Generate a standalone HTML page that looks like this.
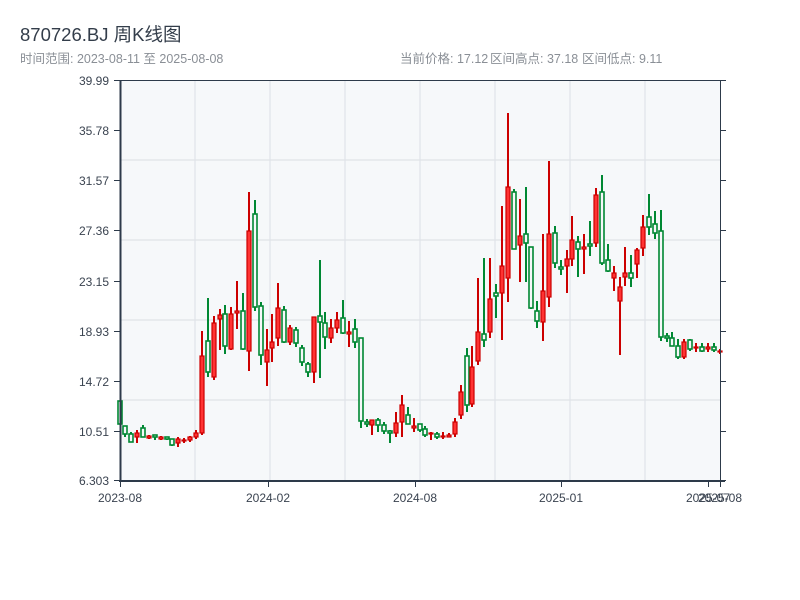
<!DOCTYPE html>
<html><head><meta charset="utf-8"><style>
html,body{margin:0;padding:0;background:#fff;width:800px;height:600px;overflow:hidden}
svg{display:block}
text{font-family:"Liberation Sans","Noto Sans CJK SC",sans-serif}
.r line,line.r{stroke:#cc0000;stroke-width:2}
.g line,line.g{stroke:#008833;stroke-width:2}
rect.r{fill:#ff3333;stroke:#cc0000;stroke-width:1.2}
rect.g{fill:#f6f8fa;stroke:#008833;stroke-width:1.6}
</style></head><body>
<svg width="800" height="600" xmlns="http://www.w3.org/2000/svg">
<text x="20" y="41" font-size="18.5" fill="#333d4a">870726.BJ 周K线图</text>
<text x="20" y="63" font-size="12.5" fill="#8a8f96">时间范围: 2023-08-11 至 2025-08-08</text>
<text x="400" y="63" font-size="12.5" fill="#8a8f96">当前价格: 17.12</text>
<text x="490" y="63" font-size="12.5" fill="#8a8f96">区间高点: 37.18</text>
<text x="582" y="63" font-size="12.5" fill="#8a8f96">区间低点: 9.11</text>
<rect x="120" y="80" width="600" height="400" fill="#f6f8fa"/>
<g stroke="#e0e3e8" stroke-width="1.2">
<line x1="195" y1="80" x2="195" y2="480"/><line x1="270" y1="80" x2="270" y2="480"/><line x1="345" y1="80" x2="345" y2="480"/><line x1="420" y1="80" x2="420" y2="480"/><line x1="495" y1="80" x2="495" y2="480"/><line x1="570" y1="80" x2="570" y2="480"/><line x1="645" y1="80" x2="645" y2="480"/>
<line x1="120" y1="160" x2="720" y2="160"/><line x1="120" y1="240" x2="720" y2="240"/><line x1="120" y1="320" x2="720" y2="320"/><line x1="120" y1="400" x2="720" y2="400"/>
</g>
<g id="c">
<rect class="g" x="118" y="401" width="4" height="23"/>
<line class="g" x1="125" y1="426" x2="125" y2="437"/><rect class="g" x="123" y="426" width="4" height="8"/>
<line class="g" x1="131" y1="432" x2="131" y2="442"/><rect class="g" x="129" y="434" width="4" height="8"/>
<line class="r" x1="137" y1="430" x2="137" y2="443"/><rect class="r" x="135" y="433" width="4" height="4"/>
<line class="g" x1="143" y1="425" x2="143" y2="437"/><rect class="g" x="141" y="428" width="4" height="9"/>
<line class="r" x1="149" y1="435" x2="149" y2="439"/><rect class="r" x="147" y="436" width="4" height="2"/>
<line class="g" x1="155" y1="435" x2="155" y2="440"/><rect class="g" x="153" y="435" width="4" height="2"/>
<line class="r" x1="161" y1="436" x2="161" y2="440"/><rect class="r" x="159" y="437" width="4" height="2"/>
<line class="g" x1="167" y1="437" x2="167" y2="440"/><rect class="g" x="165" y="437" width="4" height="2"/>
<line class="g" x1="172" y1="439" x2="172" y2="446"/><rect class="g" x="170" y="439" width="4" height="6"/>
<line class="r" x1="178" y1="437" x2="178" y2="447"/><rect class="r" x="176" y="439" width="4" height="4"/>
<line class="r" x1="184" y1="438" x2="184" y2="443"/><rect class="r" x="182" y="440" width="4" height="1"/>
<line class="r" x1="190" y1="436" x2="190" y2="442"/><rect class="r" x="188" y="437" width="4" height="3"/>
<line class="r" x1="196" y1="430" x2="196" y2="439"/><rect class="r" x="194" y="433" width="4" height="4"/>
<line class="r" x1="202" y1="331" x2="202" y2="435"/><rect class="r" x="200" y="356" width="4" height="77"/>
<line class="g" x1="208" y1="298" x2="208" y2="377"/><rect class="g" x="206" y="341" width="4" height="31"/>
<line class="r" x1="214" y1="316" x2="214" y2="380"/><rect class="r" x="212" y="323" width="4" height="54"/>
<line class="r" x1="220" y1="309" x2="220" y2="350"/><rect class="r" x="218" y="315" width="4" height="4"/>
<line class="g" x1="225" y1="305" x2="225" y2="354"/><rect class="g" x="223" y="314" width="4" height="32"/>
<line class="r" x1="231" y1="307" x2="231" y2="350"/><rect class="r" x="229" y="314" width="4" height="35"/>
<line class="r" x1="237" y1="281" x2="237" y2="329"/><rect class="r" x="235" y="311" width="4" height="2"/>
<line class="g" x1="243" y1="293" x2="243" y2="350"/><rect class="g" x="241" y="311" width="4" height="38"/>
<line class="r" x1="249" y1="192" x2="249" y2="371"/><rect class="r" x="247" y="231" width="4" height="120"/>
<line class="g" x1="255" y1="200" x2="255" y2="311"/><rect class="g" x="253" y="214" width="4" height="93"/>
<line class="g" x1="261" y1="302" x2="261" y2="365"/><rect class="g" x="259" y="306" width="4" height="49"/>
<line class="r" x1="267" y1="329" x2="267" y2="386"/><rect class="r" x="265" y="350" width="4" height="12"/>
<line class="r" x1="272" y1="314" x2="272" y2="362"/><rect class="r" x="270" y="342" width="4" height="6"/>
<line class="r" x1="278" y1="283" x2="278" y2="346"/><rect class="r" x="276" y="308" width="4" height="30"/>
<line class="g" x1="284" y1="306" x2="284" y2="343"/><rect class="g" x="282" y="310" width="4" height="32"/>
<line class="r" x1="290" y1="325" x2="290" y2="345"/><rect class="r" x="288" y="328" width="4" height="14"/>
<line class="g" x1="296" y1="327" x2="296" y2="347"/><rect class="g" x="294" y="330" width="4" height="13"/>
<line class="g" x1="302" y1="345" x2="302" y2="366"/><rect class="g" x="300" y="348" width="4" height="14"/>
<line class="g" x1="308" y1="362" x2="308" y2="377"/><rect class="g" x="306" y="364" width="4" height="8"/>
<line class="r" x1="314" y1="317" x2="314" y2="383"/><rect class="r" x="312" y="317" width="4" height="55"/>
<line class="g" x1="320" y1="260" x2="320" y2="378"/><rect class="g" x="318" y="316" width="4" height="6"/>
<line class="g" x1="325" y1="312" x2="325" y2="349"/><rect class="g" x="323" y="323" width="4" height="14"/>
<line class="r" x1="331" y1="319" x2="331" y2="343"/><rect class="r" x="329" y="328" width="4" height="10"/>
<line class="r" x1="337" y1="312" x2="337" y2="333"/><rect class="r" x="335" y="320" width="4" height="8"/>
<line class="g" x1="343" y1="300" x2="343" y2="334"/><rect class="g" x="341" y="318" width="4" height="15"/>
<line class="r" x1="349" y1="321" x2="349" y2="347"/><rect class="r" x="347" y="332" width="4" height="2"/>
<line class="g" x1="355" y1="319" x2="355" y2="348"/><rect class="g" x="353" y="329" width="4" height="13"/>
<line class="g" x1="361" y1="338" x2="361" y2="428"/><rect class="g" x="359" y="338" width="4" height="83"/>
<line class="g" x1="367" y1="419" x2="367" y2="427"/><rect class="g" x="365" y="422" width="4" height="2"/>
<line class="r" x1="372" y1="420" x2="372" y2="435"/><rect class="r" x="370" y="420" width="4" height="5"/>
<line class="g" x1="378" y1="418" x2="378" y2="432"/><rect class="g" x="376" y="420" width="4" height="5"/>
<line class="g" x1="384" y1="422" x2="384" y2="434"/><rect class="g" x="382" y="425" width="4" height="6"/>
<line class="g" x1="390" y1="430" x2="390" y2="443"/><rect class="g" x="388" y="431" width="4" height="2"/>
<line class="r" x1="396" y1="412" x2="396" y2="437"/><rect class="r" x="394" y="423" width="4" height="10"/>
<line class="r" x1="402" y1="395" x2="402" y2="437"/><rect class="r" x="400" y="405" width="4" height="17"/>
<line class="g" x1="408" y1="407" x2="408" y2="424"/><rect class="g" x="406" y="415" width="4" height="9"/>
<line class="r" x1="414" y1="418" x2="414" y2="432"/><rect class="r" x="412" y="426" width="4" height="2"/>
<line class="g" x1="420" y1="424" x2="420" y2="432"/><rect class="g" x="418" y="424" width="4" height="6"/>
<line class="g" x1="425" y1="426" x2="425" y2="437"/><rect class="g" x="423" y="429" width="4" height="6"/>
<line class="r" x1="431" y1="432" x2="431" y2="440"/><rect class="r" x="429" y="433" width="4" height="1"/>
<line class="g" x1="437" y1="432" x2="437" y2="439"/><rect class="g" x="435" y="434" width="4" height="3"/>
<line class="r" x1="443" y1="432" x2="443" y2="439"/><rect class="r" x="441" y="436" width="4" height="1"/>
<line class="r" x1="449" y1="433" x2="449" y2="437"/><rect class="r" x="447" y="435" width="4" height="2"/>
<line class="r" x1="455" y1="418" x2="455" y2="437"/><rect class="r" x="453" y="422" width="4" height="12"/>
<line class="r" x1="461" y1="385" x2="461" y2="419"/><rect class="r" x="459" y="392" width="4" height="23"/>
<line class="g" x1="467" y1="348" x2="467" y2="412"/><rect class="g" x="465" y="356" width="4" height="49"/>
<line class="r" x1="472" y1="346" x2="472" y2="407"/><rect class="r" x="470" y="367" width="4" height="37"/>
<line class="r" x1="478" y1="278" x2="478" y2="365"/><rect class="r" x="476" y="332" width="4" height="29"/>
<line class="g" x1="484" y1="258" x2="484" y2="347"/><rect class="g" x="482" y="334" width="4" height="6"/>
<line class="r" x1="490" y1="258" x2="490" y2="338"/><rect class="r" x="488" y="299" width="4" height="33"/>
<line class="g" x1="496" y1="284" x2="496" y2="318"/><rect class="g" x="494" y="293" width="4" height="3"/>
<line class="r" x1="502" y1="206" x2="502" y2="340"/><rect class="r" x="500" y="266" width="4" height="27"/>
<line class="r" x1="508" y1="113" x2="508" y2="302"/><rect class="r" x="506" y="187" width="4" height="91"/>
<line class="g" x1="514" y1="189" x2="514" y2="249"/><rect class="g" x="512" y="192" width="4" height="57"/>
<line class="r" x1="520" y1="199" x2="520" y2="282"/><rect class="r" x="518" y="236" width="4" height="9"/>
<line class="g" x1="526" y1="187" x2="526" y2="282"/><rect class="g" x="524" y="234" width="4" height="9"/>
<line class="g" x1="531" y1="247" x2="531" y2="309"/><rect class="g" x="529" y="247" width="4" height="61"/>
<line class="g" x1="537" y1="301" x2="537" y2="328"/><rect class="g" x="535" y="311" width="4" height="10"/>
<line class="r" x1="543" y1="234" x2="543" y2="341"/><rect class="r" x="541" y="291" width="4" height="31"/>
<line class="r" x1="549" y1="161" x2="549" y2="307"/><rect class="r" x="547" y="234" width="4" height="63"/>
<line class="g" x1="555" y1="226" x2="555" y2="268"/><rect class="g" x="553" y="233" width="4" height="30"/>
<line class="g" x1="561" y1="260" x2="561" y2="275"/><rect class="g" x="559" y="267" width="4" height="2"/>
<line class="r" x1="567" y1="250" x2="567" y2="293"/><rect class="r" x="565" y="259" width="4" height="7"/>
<line class="r" x1="572" y1="216" x2="572" y2="266"/><rect class="r" x="570" y="240" width="4" height="19"/>
<line class="g" x1="578" y1="236" x2="578" y2="277"/><rect class="g" x="576" y="242" width="4" height="7"/>
<line class="r" x1="584" y1="234" x2="584" y2="274"/><rect class="r" x="582" y="247" width="4" height="2"/>
<line class="g" x1="590" y1="221" x2="590" y2="256"/><rect class="g" x="588" y="244" width="4" height="2"/>
<line class="r" x1="596" y1="188" x2="596" y2="247"/><rect class="r" x="594" y="195" width="4" height="48"/>
<line class="g" x1="602" y1="175" x2="602" y2="265"/><rect class="g" x="600" y="192" width="4" height="71"/>
<line class="g" x1="608" y1="244" x2="608" y2="272"/><rect class="g" x="606" y="260" width="4" height="11"/>
<line class="r" x1="614" y1="266" x2="614" y2="291"/><rect class="r" x="612" y="273" width="4" height="5"/>
<line class="r" x1="620" y1="277" x2="620" y2="355"/><rect class="r" x="618" y="287" width="4" height="14"/>
<line class="r" x1="625" y1="247" x2="625" y2="286"/><rect class="r" x="623" y="273" width="4" height="4"/>
<line class="g" x1="631" y1="255" x2="631" y2="287"/><rect class="g" x="629" y="273" width="4" height="5"/>
<line class="r" x1="637" y1="248" x2="637" y2="278"/><rect class="r" x="635" y="250" width="4" height="14"/>
<line class="r" x1="643" y1="215" x2="643" y2="256"/><rect class="r" x="641" y="227" width="4" height="21"/>
<line class="g" x1="649" y1="194" x2="649" y2="235"/><rect class="g" x="647" y="217" width="4" height="10"/>
<line class="g" x1="655" y1="211" x2="655" y2="239"/><rect class="g" x="653" y="224" width="4" height="9"/>
<line class="g" x1="661" y1="210" x2="661" y2="341"/><rect class="g" x="659" y="231" width="4" height="106"/>
<line class="g" x1="667" y1="333" x2="667" y2="342"/><rect class="g" x="665" y="336" width="4" height="2"/>
<line class="g" x1="672" y1="332" x2="672" y2="346"/><rect class="g" x="670" y="338" width="4" height="8"/>
<line class="g" x1="678" y1="339" x2="678" y2="359"/><rect class="g" x="676" y="346" width="4" height="11"/>
<line class="r" x1="684" y1="339" x2="684" y2="359"/><rect class="r" x="682" y="342" width="4" height="15"/>
<line class="g" x1="690" y1="339" x2="690" y2="351"/><rect class="g" x="688" y="340" width="4" height="9"/>
<line class="r" x1="696" y1="343" x2="696" y2="352"/><rect class="r" x="694" y="347" width="4" height="1"/>
<line class="g" x1="702" y1="343" x2="702" y2="352"/><rect class="g" x="700" y="347" width="4" height="4"/>
<line class="r" x1="708" y1="343" x2="708" y2="352"/><rect class="r" x="706" y="347" width="4" height="2"/>
<line class="g" x1="714" y1="343" x2="714" y2="352"/><rect class="g" x="712" y="347" width="4" height="3"/>
<line class="r" x1="720" y1="349" x2="720" y2="354"/><rect class="r" x="718" y="351" width="4" height="1"/>
</g>
<g stroke="#2d3a4a" fill="none">
<line x1="120.5" y1="80" x2="120.5" y2="481" stroke-width="2"/>
<line x1="119" y1="481" x2="725" y2="481" stroke-width="2"/>
<line x1="120" y1="80.5" x2="726" y2="80.5" stroke-width="1"/>
<line x1="720.5" y1="80" x2="720.5" y2="481" stroke-width="1"/>
<path stroke-width="1" d="M114 80.5H120M114 130.5H120M114 180.5H120M114 230.5H120M114 281.5H120M114 331.5H120M114 381.5H120M114 431.5H120M114 480.5H120M720 130.5H726M720 180.5H726M720 230.5H726M720 281.5H726M720 331.5H726M720 381.5H726M720 431.5H726M720 480.5H726M120.5 481V487M268.5 481V487M415.5 481V487M561.5 481V487M708.5 481V487M720.5 481V487"/>
</g>
<g font-size="12" fill="#3a4350" text-anchor="end">
<text x="109" y="85">39.99</text><text x="109" y="135">35.78</text><text x="109" y="185">31.57</text><text x="109" y="235">27.36</text><text x="109" y="286">23.15</text><text x="109" y="336">18.93</text><text x="109" y="386">14.72</text><text x="109" y="436">10.51</text><text x="109" y="485">6.303</text>
</g>
<g font-size="12" fill="#3a4350" text-anchor="middle">
<text x="120" y="502">2023-08</text><text x="268" y="502">2024-02</text><text x="415" y="502">2024-08</text><text x="561" y="502">2025-01</text><text x="708" y="502">2025-07</text><text x="720" y="502">2025-08</text>
</g>
</svg>
</body></html>
